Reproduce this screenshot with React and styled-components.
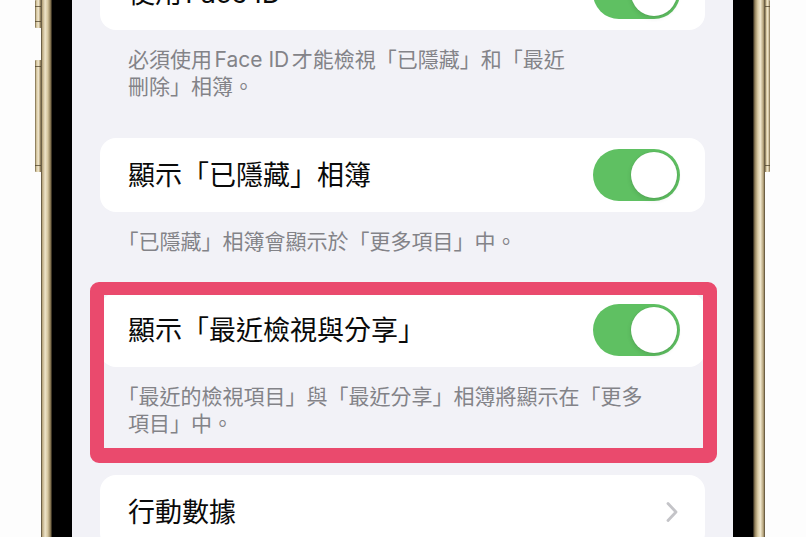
import React from "react";
import styled, { createGlobalStyle } from "styled-components";

const GlobalStyle = createGlobalStyle`
  html, body { margin: 0; padding: 0; background: #ffffff; }
  body {
    width: 806px;
    height: 537px;
    overflow: hidden;
    font-family: Inter, "Noto Sans CJK TC", sans-serif;
  }
`;

const Stage = styled.div`
  display: flex;
  width: 806px;
  height: 537px;
  padding-left: 35px;
  box-sizing: border-box;
  background: #fdfdfd;
  overflow: hidden;
`;

const SideKeys = styled.div`
  display: flex;
  flex-direction: column;
  width: ${(p) => p.$w}px;
  flex-shrink: 0;
`;

const Key = styled.div`
  position: relative;
  height: ${(p) => p.$h}px;
  margin-top: ${(p) => p.$top || 0}px;
  background: linear-gradient(
    to right,
    #6f6145,
    #d3c49c 25%,
    #f2e9d1 55%,
    #bcaa82 82%,
    #6a5c40
  );
  border-radius: ${(p) => (p.$side === "left" ? "1px 0 0 1px" : "0 1px 1px 0")};
  &::before,
  &::after {
    content: "";
    position: absolute;
    left: 0;
    right: 0;
    height: 1px;
    background: rgba(70, 58, 36, 0.7);
  }
  &::before { top: 6px; }
  &::after { bottom: 6px; }
`;

const Rail = styled.div`
  width: ${(p) => p.$w}px;
  flex-shrink: 0;
  background: ${(p) =>
    p.$side === "left"
      ? "linear-gradient(to right, #3d3424 0, #b8a67e 12%, #eee4ca 38%, #d5c59e 62%, #8e7d58 85%, #1c170f 100%)"
      : "linear-gradient(to right, #1c170f 0, #8e7d58 15%, #d8c9a2 40%, #f0e7cd 62%, #b5a37b 86%, #4f4430 100%)"};
`;

const Bezel = styled.div`
  width: 20px;
  flex-shrink: 0;
  background: #000;
`;

const Screen = styled.div`
  width: 661px;
  flex-shrink: 0;
  height: 537px;
  background: #f2f2f7;
  overflow: hidden;
  padding: 0 28px;
  box-sizing: border-box;
`;

const List = styled.div`
  display: flex;
  flex-direction: column;
  margin-top: -44px;
`;

const Section = styled.section`
  position: relative;
  margin-bottom: 38px;
  ${(p) =>
    p.$highlight &&
    `
    &::after {
      content: "";
      position: absolute;
      top: -11px;
      left: -10px;
      right: -12px;
      bottom: -26px;
      border-style: solid;
      border-color: #ea4a6d;
      border-width: 13px 14px 15px 14px;
      border-radius: 9px;
      pointer-events: none;
    }
  `}
`;

const Card = styled.div`
  background: #ffffff;
  border-radius: 16px;
  overflow: hidden;
`;

const Row = styled.div`
  height: 74px;
  display: flex;
  align-items: center;
  justify-content: space-between;
  padding: 0 25px 0 28px;
  box-sizing: border-box;
`;

const Label = styled.span`
  font-size: 27px;
  line-height: 1;
  color: #0a0a0a;
  white-space: nowrap;
  text-spacing-trim: trim-start;
  text-autospace: normal;
`;

const Footer = styled.p`
  margin: 0;
  padding: 16px 0 0 28px;
  font-size: 21px;
  line-height: 27px;
  color: #838388;
  text-spacing-trim: trim-start;
  text-autospace: normal;
`;

const Switch = styled.div`
  width: 87px;
  height: 52px;
  border-radius: 26px;
  background: #5fc062;
  padding: 3px;
  box-sizing: border-box;
  display: flex;
  justify-content: ${(p) => (p.$on ? "flex-end" : "flex-start")};
  flex-shrink: 0;
`;

const Knob = styled.div`
  width: 46px;
  height: 46px;
  border-radius: 50%;
  background: #ffffff;
  box-shadow: 0 2px 5px rgba(0, 0, 0, 0.12), 0 0 0 0.5px rgba(0, 0, 0, 0.06);
`;

const Chevron = () => (
  <svg width="16" height="24" viewBox="0 0 16 24" aria-hidden="true">
    <path
      d="M4 3.5 L12 12 L4 20.5"
      fill="none"
      stroke="#c4c4c8"
      strokeWidth="2.8"
      strokeLinecap="round"
      strokeLinejoin="round"
    />
  </svg>
);

const Toggle = ({ on = true }) => (
  <Switch $on={on}>
    <Knob />
  </Switch>
);

export default function App() {
  return (
    <>
      <GlobalStyle />
      <Stage lang="zh-Hant">
        <SideKeys $w={6}>
          <Key $side="left" $h={28} />
          <Key $side="left" $h={112} $top={32} />
        </SideKeys>
        <Rail $side="left" $w={11} />
        <Bezel />
        <Screen>
          <List>
            <Section>
              <Card>
                <Row>
                  <Label>使用Face ID</Label>
                  <Toggle />
                </Row>
              </Card>
              <Footer>
                必須使用Face ID才能檢視「已隱藏」和「最近
                <br />
                刪除」相簿。
              </Footer>
            </Section>

            <Section>
              <Card>
                <Row>
                  <Label>顯示「已隱藏」相簿</Label>
                  <Toggle />
                </Row>
              </Card>
              <Footer>「已隱藏」相簿會顯示於「更多項目」中。</Footer>
            </Section>

            <Section $highlight>
              <Card>
                <Row>
                  <Label>顯示「最近檢視與分享」</Label>
                  <Toggle />
                </Row>
              </Card>
              <Footer>
                「最近的檢視項目」與「最近分享」相簿將顯示在「更多
                <br />
                項目」中。
              </Footer>
            </Section>

            <Section>
              <Card>
                <Row>
                  <Label>行動數據</Label>
                  <Chevron />
                </Row>
              </Card>
            </Section>
          </List>
        </Screen>
        <Bezel />
        <Rail $side="right" $w={12} />
        <SideKeys $w={5}>
          <Key $side="right" $h={172} />
        </SideKeys>
      </Stage>
    </>
  );
}
